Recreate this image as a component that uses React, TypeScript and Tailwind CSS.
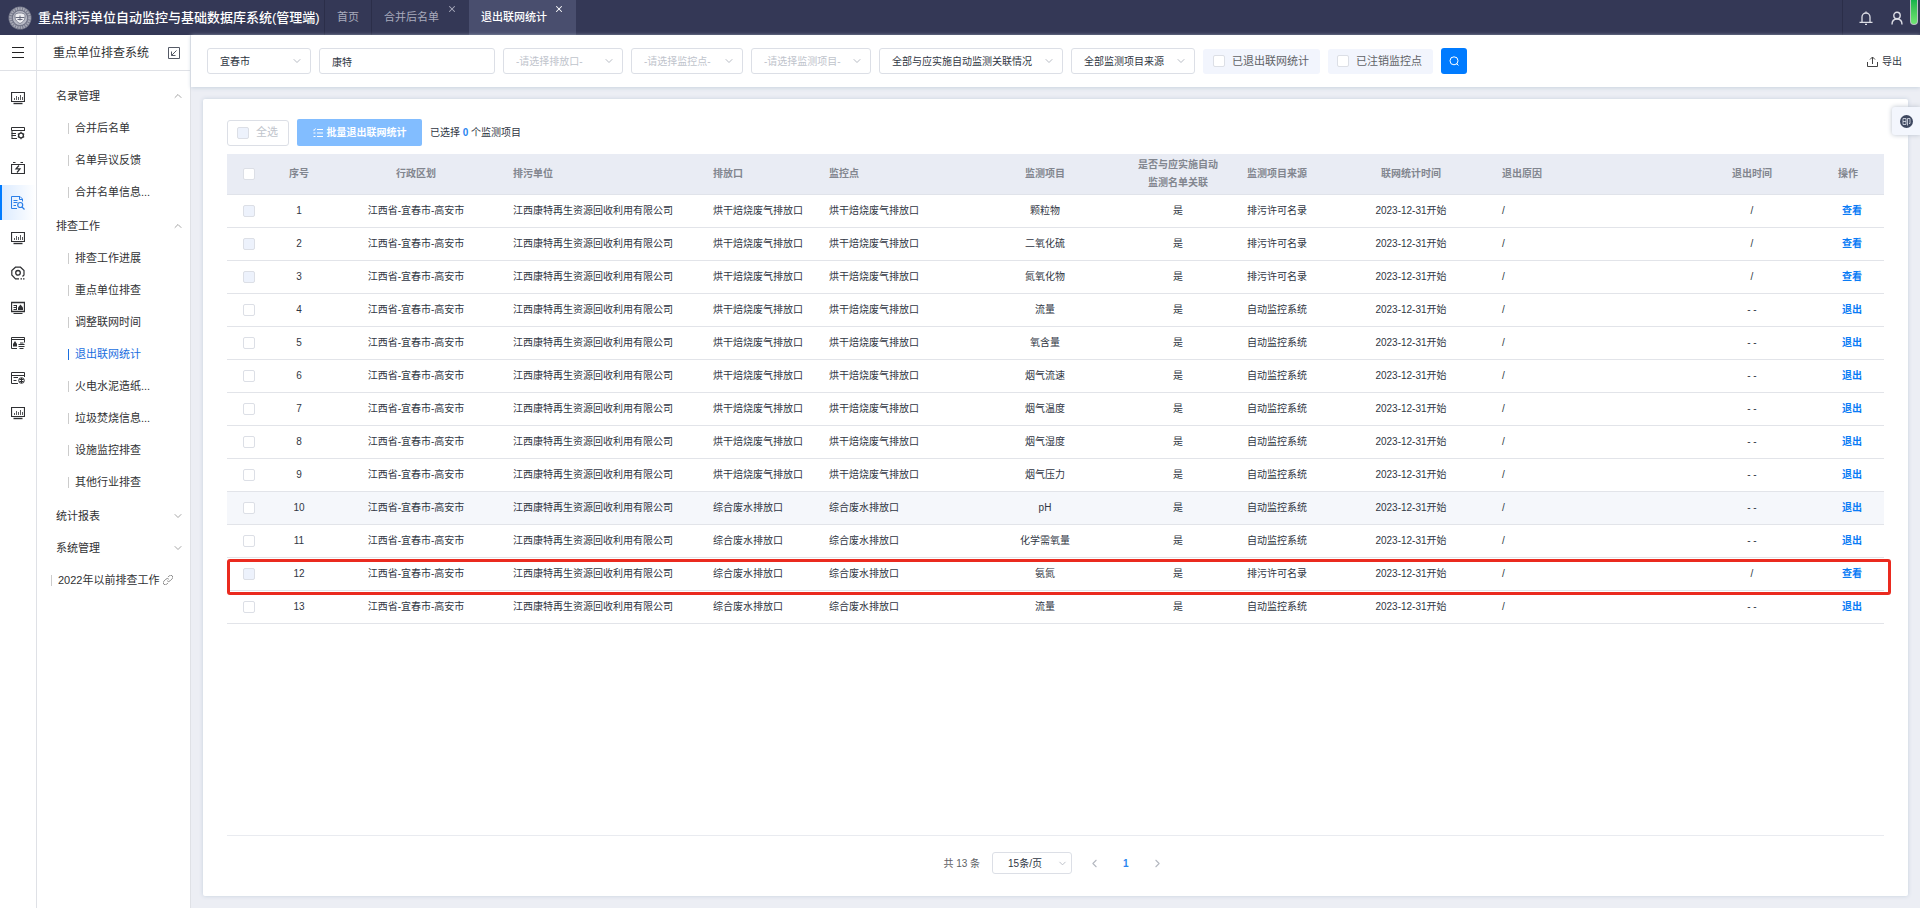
import { useState } from "react"
import type { ReactNode } from "react"
import { ChevronDown, ChevronLeft, ChevronRight, ChevronUp, X } from "lucide-react"

const menuGroups = [
    { title: "名录管理", open: true, items: ["合并后名单", "名单异议反馈", "合并名单信息..."] },
    {
        title: "排查工作",
        open: true,
        items: [
            "排查工作进展",
            "重点单位排查",
            "调整联网时间",
            "退出联网统计",
            "火电水泥造纸...",
            "垃圾焚烧信息...",
            "设施监控排查",
            "其他行业排查",
        ],
    },
    { title: "统计报表", open: false, items: [] },
    { title: "系统管理", open: false, items: [] },
]

const GAS = "烘干焙烧废气排放口"
const WATER = "综合废水排放口"

const rows = [
    { outlet: GAS, item: "颗粒物", licensed: true },
    { outlet: GAS, item: "二氧化硫", licensed: true },
    { outlet: GAS, item: "氮氧化物", licensed: true },
    { outlet: GAS, item: "流量", licensed: false },
    { outlet: GAS, item: "氧含量", licensed: false },
    { outlet: GAS, item: "烟气流速", licensed: false },
    { outlet: GAS, item: "烟气温度", licensed: false },
    { outlet: GAS, item: "烟气湿度", licensed: false },
    { outlet: GAS, item: "烟气压力", licensed: false },
    { outlet: WATER, item: "pH", licensed: false },
    { outlet: WATER, item: "化学需氧量", licensed: false },
    { outlet: WATER, item: "氨氮", licensed: true },
    { outlet: WATER, item: "流量", licensed: false },
]

const ACTIVE_ROW = 9
const MARKED_ROW = 11

function RailSvg({ children }: { children: ReactNode }) {
    return (
        <svg width="14" height="14" viewBox="0 0 14 14" fill="none" stroke="currentColor">
            {children}
        </svg>
    )
}

function ChartIcon() {
    return (
        <RailSvg>
            <path d="M.5 1.500h13v9H.5z" strokeWidth="1.200" />
            <path d="M2.500 12.500h9" strokeWidth="1.400" />
            <path d="M3.500 9V7M5.500 9V5M7.500 9V6M9.500 9V4M11.500 9V6" strokeWidth=".8" />
        </RailSvg>
    )
}

function GearListIcon() {
    return (
        <RailSvg>
            <path d="M13.500 5V1.500H.5M.5 4.500h13M.5 1.500v3M.5 7.500h4.500M.5 9.500h4.500M.5 12.500h5.500M1 4.500v8" />
            <circle cx="10" cy="9.500" r="2.400" strokeWidth="1.300" />
            <path d="M10 5.800v1.300M10 11.900v1.300M6.800 7.700l1.200.7M12 10.600l1.200.7M6.800 11.300l1.200-.7M12 8.400l1.200-.7" strokeWidth="1.200" />
        </RailSvg>
    )
}

function PowerIcon() {
    return (
        <RailSvg>
            <path d="M.5 3.500h13v9H.5z" strokeWidth="1.200" />
            <path d="M2 1.500h2.500M9.500 1.500H12M8 4.500L5 7.800h4L6 11.500" strokeWidth="1.200" />
        </RailSvg>
    )
}

function SearchDocIcon() {
    return (
        <RailSvg>
            <path d="M6 12.500H.5V.5h8.500l2.500 2.500v2.500M8.500.500v3h3M2.500 4.500h4M2.500 6.500h4M2.500 9.500h2.500" />
            <circle cx="9.200" cy="9" r="2.500" strokeWidth="1.200" />
            <path d="M11 11l2.500 2.500" strokeWidth="1.200" />
        </RailSvg>
    )
}

function HexIcon() {
    return (
        <RailSvg>
            <path d="M8 12.800H4.500L.8 9V4.500L4.500 1.200h5L13 4.500V9l-1.500 1.500M9.500 12.800h1.500M12 12.800h1.500" strokeWidth="1.200" />
            <circle cx="7" cy="6.800" r="2.300" strokeWidth="1.300" />
        </RailSvg>
    )
}

function FireScreenIcon() {
    return (
        <RailSvg>
            <path d="M.5 1.500h13v9H.5z" strokeWidth="1.300" />
            <path d="M2.500 12.500h9M2.500 4.500h3M2.500 6.500h3M2.500 8.500h3M5.500 4v5" />
            <path d="M9.500 3.500l2.500 3v2.500H7V6.500z" fill="currentColor" stroke="none" />
        </RailSvg>
    )
}

function FirePanelIcon() {
    return (
        <RailSvg>
            <path d="M13.500 6.500v-5H.5v11H6M.5 3.500h13" />
            <path d="M4 5l2 3v2.500H2V8z" fill="currentColor" stroke="none" />
            <path d="M7.500 8.500h6M7.500 10.500h6M8.500 12.500h4M9 7h3.500" />
        </RailSvg>
    )
}

function ShieldPanelIcon() {
    return (
        <RailSvg>
            <path d="M13.500 6V1.500H.5v11H7M.5 4.500h13M2.500 6.500h4.500M2.500 9.500h3" />
            <circle cx="10.500" cy="9.500" r="2.800" />
            <path d="M8.500 8.500h4M8.500 10.500h4M10.500 7v5" />
        </RailSvg>
    )
}

const railItems = [
    { label: "统计", Icon: ChartIcon },
    { label: "配置", Icon: GearListIcon },
    { label: "电力", Icon: PowerIcon },
    { label: "排查", Icon: SearchDocIcon },
    { label: "监控", Icon: ChartIcon },
    { label: "设备", Icon: HexIcon },
    { label: "焚烧", Icon: FireScreenIcon },
    { label: "排放", Icon: FirePanelIcon },
    { label: "防护", Icon: ShieldPanelIcon },
    { label: "报表", Icon: ChartIcon },
]

function Emblem() {
    return (
        <svg width="24" height="24" viewBox="0 0 24 24" className="shrink-0">
            <circle cx="12" cy="12" r="11.500" fill="#777a8c" />
            <circle cx="12" cy="12" r="9.500" fill="none" stroke="#a9abb8" strokeWidth="2.500" strokeDasharray="1.500 1" />
            <circle cx="12" cy="12" r="7.500" fill="#b9bbc6" stroke="#5c5f75" strokeWidth=".6" />
            <path d="M7 8.500c2-2 8-2 10 0v3c0 2.500-2.500 5-5 6-2.500-1-5-3.500-5-6z" fill="#eeeef2" stroke="#6a6d80" strokeWidth=".8" />
            <path d="M7.500 11.500h9M12 9.500v5M9.500 13.500h5" stroke="#5a5d73" strokeWidth=".9" />
        </svg>
    )
}

function Picker({ label, text, className, muted }: { label: string; text: string; className: string; muted?: boolean }) {
    return (
        <div className={`relative shrink-0 ${className}`}>
            <select
                aria-label={label}
                className={`h-[26px] w-full appearance-none rounded-[3px] border border-[#dcdfe6] bg-white pl-3 text-[10px] outline-none ${muted ? "text-[#c0c4cc]" : "text-[#303643]"}`}
            >
                <option>{text}</option>
            </select>
            <ChevronDown size={12} strokeWidth={2} className="pointer-events-none absolute top-[7px] right-2 text-[#b8bcc4]" />
        </div>
    )
}

function CheckBox({ label, disabled }: { label: string; disabled?: boolean }) {
    return (
        <input
            type="checkbox"
            aria-label={label}
            disabled={disabled}
            className="block size-3 shrink-0 appearance-none rounded-[2px] border border-[#dcdfe6] bg-white checked:bg-[#007bff] disabled:bg-[#edf2fc]"
        />
    )
}

function TopBar() {
    return (
        <header className="flex h-[35px] shrink-0 items-stretch bg-[#343856] text-[11px] text-[#a9abbd]">
            <div className="flex w-[324px] shrink-0 items-center gap-1.5 pl-2">
                <Emblem />
                <h1 className="text-[13px] font-medium whitespace-nowrap text-white">重点排污单位自动监控与基础数据库系统(管理端)</h1>
            </div>
            <nav className="flex">
                <a href="#home" className="flex w-12 items-center justify-center border-x border-[#2b2e49]">首页</a>
                <div className="relative flex w-[97px] items-center pl-3">
                    <a href="#merged">合并后名单</a>
                    <button type="button" aria-label="关闭合并后名单" className="absolute top-1 right-3">
                        <X size={10} strokeWidth={2.5} />
                    </button>
                </div>
                <div className="relative flex w-[107px] items-center bg-[#494e6e] pl-3 font-medium text-white">
                    <a href="#exit">退出联网统计</a>
                    <button type="button" aria-label="关闭退出联网统计" className="absolute top-1 right-3">
                        <X size={10} strokeWidth={2.5} />
                    </button>
                </div>
            </nav>
            <div className="relative ml-auto flex w-[78px] items-center gap-[18px] border-l border-[#2b2e49] pl-4 text-[#dcdde5]">
                <button type="button" aria-label="通知">
                    <svg width="14" height="14" viewBox="0 0 14 14" fill="none" stroke="currentColor" strokeWidth="1.3">
                        <path d="M3 11V6a4 4 0 0 1 8 0v5M.5 11.300h13M6 13.300h2M7 .5V2" />
                    </svg>
                </button>
                <button type="button" aria-label="用户">
                    <svg width="12" height="14" viewBox="0 0 12 14" fill="none" stroke="currentColor" strokeWidth="1.4">
                        <circle cx="6" cy="4.500" r="3.200" />
                        <path d="M1 13.500c0-3.500 2-5.500 5-5.500s5 2 5 5.500" />
                    </svg>
                </button>
                <span className="absolute top-0 right-0.5 h-[25px] w-2 rounded-b-full border border-t-0 border-[#b9c4c4] bg-gradient-to-b from-[#12b34b] to-[#6fe673]" />
            </div>
        </header>
    )
}

function Rail() {
    return (
        <nav className="flex w-[37px] shrink-0 flex-col border-r border-[#dfe1e6] bg-white text-[#2f3033]">
            <button type="button" aria-label="展开菜单" className="flex h-9 shrink-0 items-center justify-center border-b border-[#dfe1e6]">
                <svg width="12" height="11" viewBox="0 0 12 11" stroke="#222" strokeWidth="1.200">
                    <path d="M0 .5h12M0 5.500h12M0 10.500h12" />
                </svg>
            </button>
            <div className="flex flex-col pt-[9px]">
                {railItems.map(({ label, Icon }, i) => (
                    <a
                        key={label}
                        href="#rail"
                        aria-label={label}
                        className={`flex h-[35px] items-center justify-center ${i === 3 ? "border-l-2 border-[#007bff] bg-gradient-to-r from-[#dcebff] to-white pr-0.5 text-[#2b7fe8]" : ""}`}
                    >
                        <Icon />
                    </a>
                ))}
            </div>
        </nav>
    )
}

function SideMenu() {
    return (
        <aside className="flex w-[154px] shrink-0 flex-col border-r border-[#dfe1e6] bg-white text-[11px] text-[#303133]">
            <div className="flex h-9 shrink-0 items-center justify-between border-b border-[#dfe1e6] pr-2.5 pl-4">
                <h2 className="text-xs">重点单位排查系统</h2>
                <button type="button" aria-label="收起">
                    <svg width="12" height="12" viewBox="0 0 12 12" fill="none" stroke="#555a66">
                        <path d="M.5.500h11v11H.5zM8.500 3.500l-5 5M3.500 4.500v4h4" />
                    </svg>
                </button>
            </div>
            <div className="pt-[9px]">
                {menuGroups.map(group => (
                    <div key={group.title}>
                        <button type="button" className="flex h-8 w-full items-center justify-between pr-1.5 pl-[19px]">
                            {group.title}
                            {group.open
                                ? <ChevronUp size={12} strokeWidth={1.5} className="text-[#888]" />
                                : <ChevronDown size={12} strokeWidth={1.5} className="text-[#888]" />}
                        </button>
                        {group.open && (
                            <ul className="pb-0.5">
                                {group.items.map(item => {
                                    const current = item === "退出联网统计"
                                    return (
                                        <li key={item} className="flex h-8 items-center pl-[31px]">
                                            <a
                                                href="#menu"
                                                className={`flex items-center gap-1.5 whitespace-nowrap before:h-[11px] before:w-px ${current ? "text-[#1a6fe0] before:bg-[#1a6fe0]" : "before:bg-[#ccc]"}`}
                                            >
                                                {item}
                                            </a>
                                        </li>
                                    )
                                })}
                            </ul>
                        )}
                    </div>
                ))}
                <a href="#old" className="flex h-8 items-center gap-1.5 pl-3.5 whitespace-nowrap before:h-[11px] before:w-px before:bg-[#ccc]">
                    <span className="flex items-center gap-1">
                        2022年以前排查工作
                        <svg width="10" height="10" viewBox="0 0 24 24" fill="none" stroke="#777" strokeWidth="2">
                            <path d="M10 14a5 5 0 0 0 7 0l5-5a4.500 4.500 0 0 0-7-7l-3 3M14 10a5 5 0 0 0-7 0l-5 5a4.500 4.500 0 0 0 7 7l3-3" />
                        </svg>
                    </span>
                </a>
            </div>
        </aside>
    )
}

function FilterBar() {
    return (
        <form className="flex h-[52px] shrink-0 items-center gap-2 bg-white pr-[18px] pl-4 text-[10px] text-[#303643] shadow-[0_1px_4px_#c9d3de]">
            <Picker label="城市" text="宜春市" className="w-[104px]" />
            <input
                aria-label="单位名称"
                defaultValue="康特"
                className="h-[26px] w-44 shrink-0 rounded-[3px] border border-[#dcdfe6] px-3 outline-none"
            />
            <Picker label="排放口" text="-请选择排放口-" className="w-[120px]" muted />
            <Picker label="监控点" text="-请选择监控点-" className="w-28" muted />
            <Picker label="监测项目" text="-请选择监测项目-" className="w-[120px]" muted />
            <Picker label="关联情况" text="全部与应实施自动监测关联情况" className="w-[184px]" />
            <Picker label="项目来源" text="全部监测项目来源" className="w-[124px]" />
            <label className="flex h-[25px] w-[117px] shrink-0 items-center gap-[7px] rounded-[3px] bg-[#f2f5fd] pl-2.5 text-[11px] whitespace-nowrap text-[#606266]">
                <CheckBox label="已退出联网统计" />
                已退出联网统计
            </label>
            <label className="flex h-[25px] w-[105px] shrink-0 items-center gap-[7px] rounded-[3px] bg-[#f2f5fd] pl-[9px] text-[11px] whitespace-nowrap text-[#606266]">
                <CheckBox label="已注销监控点" />
                已注销监控点
            </label>
            <button type="button" aria-label="查询" className="flex h-[26px] w-[26px] shrink-0 items-center justify-center rounded-[3px] bg-[#007bff] text-white">
                <svg width="10" height="10" viewBox="0 0 10 10" fill="none" stroke="currentColor">
                    <circle cx="5" cy="4.800" r="4" />
                    <path d="M7.500 7.500L9.500 9.500" />
                </svg>
            </button>
            <button type="button" className="ml-auto flex shrink-0 items-center gap-1">
                <svg width="11" height="11" viewBox="0 0 11 11" fill="none" stroke="#444">
                    <path d="M.5 6v4.500h10V6M5.500 8V1M3 3.500L5.500 1 8 3.500" />
                </svg>
                导出
            </button>
        </form>
    )
}

function DataTable() {
    return (
        <table className="w-full table-fixed border-collapse text-[10px] text-[#303643]">
            <colgroup>
                <col className="w-11" />
                <col className="w-14" />
                <col className="w-[178px]" />
                <col className="w-[200px]" />
                <col className="w-[116px]" />
                <col className="w-[152px]" />
                <col className="w-36" />
                <col className="w-[122px]" />
                <col className="w-[89px]" />
                <col className="w-[166px]" />
                <col />
                <col className="w-[124px]" />
                <col className="w-[70px]" />
            </colgroup>
            <thead>
                <tr className="h-10 border-b border-[#e0e3ea] bg-[#e9ecf4] text-[#82868f] [&>th]:font-bold">
                    <th className="pl-4"><CheckBox label="选择全部" /></th>
                    <th>序号</th>
                    <th>行政区划</th>
                    <th className="pl-2 text-left">排污单位</th>
                    <th className="pl-2 text-left">排放口</th>
                    <th className="pl-2 text-left">监控点</th>
                    <th>监测项目</th>
                    <th className="leading-[18px]">是否与应实施自动<br />监测名单关联</th>
                    <th className="pl-2 text-left">监测项目来源</th>
                    <th>联网统计时间</th>
                    <th className="pl-2 text-left">退出原因</th>
                    <th>退出时间</th>
                    <th className="pr-0.5">操作</th>
                </tr>
            </thead>
            <tbody>
                {rows.map((row, i) => (
                    <tr key={i} className={`relative h-[33px] border-b border-[#e2e4e9] text-center ${i === ACTIVE_ROW ? "bg-[#f5f7fb]" : ""}`}>
                        <td className="pl-4">
                            <CheckBox label={`选择第${i + 1}行`} disabled={row.licensed} />
                            {i === MARKED_ROW && (
                                <span className="pointer-events-none absolute top-0.5 -right-[7px] left-0 z-10 h-9 rounded-[3px] border-[3px] border-[#ea2a1f]" />
                            )}
                        </td>
                        <td>{i + 1}</td>
                        <td>江西省-宜春市-高安市</td>
                        <td className="pl-2 text-left">江西康特再生资源回收利用有限公司</td>
                        <td className="pl-2 text-left">{row.outlet}</td>
                        <td className="pl-2 text-left">{row.outlet}</td>
                        <td>{row.item}</td>
                        <td>是</td>
                        <td className="pl-2 text-left">{row.licensed ? "排污许可名录" : "自动监控系统"}</td>
                        <td>2023-12-31开始</td>
                        <td className="pl-2 text-left">/</td>
                        <td>{row.licensed ? "/" : "- -"}</td>
                        <td className="pl-1.5">
                            <button type="button" className="font-bold text-[#0a7cf5]">{row.licensed ? "查看" : "退出"}</button>
                        </td>
                    </tr>
                ))}
            </tbody>
        </table>
    )
}

function Pagination() {
    const [page] = useState(1)

    return (
        <div className="flex h-[61px] shrink-0 items-center justify-center border-t border-[#e9ebf0] pr-1 pb-1.5 text-[10px] text-[#606266]">
            <span>共 13 条</span>
            <div className="relative ml-3 w-20">
                <select aria-label="每页条数" className="h-[22px] w-full appearance-none rounded-[3px] border border-[#dcdfe6] bg-white pl-[15px] text-[#303643] outline-none">
                    <option>15条/页</option>
                </select>
                <ChevronDown size={11} strokeWidth={2} className="pointer-events-none absolute top-1.5 right-1 text-[#b8bcc4]" />
            </div>
            <button type="button" aria-label="上一页" className="ml-4 text-[#b4b8c0]"><ChevronLeft size={13} /></button>
            <button type="button" className="mx-[22px] font-bold text-[#2a86f0]">{page}</button>
            <button type="button" aria-label="下一页" className="text-[#b4b8c0]"><ChevronRight size={13} /></button>
        </div>
    )
}

export default function App() {
    return (
        <div className="flex h-screen flex-col overflow-hidden bg-[#eceef4] font-['Liberation_Sans','Noto_Sans_CJK_SC',sans-serif]">
            <TopBar />
            <div className="flex min-h-0 flex-1">
                <Rail />
                <SideMenu />
                <div className="relative flex min-w-0 flex-1 flex-col">
                    <FilterBar />
                    <main className="m-3 flex min-h-0 flex-1 flex-col rounded-[2px] bg-white px-6 shadow-[0_0_4px_#c5d0de]">
                        <div className="mt-5 mb-2 flex h-[27px] shrink-0 items-center gap-2 text-[10px]">
                            <label className="flex h-[26px] w-[62px] items-center gap-[7px] rounded-[3px] border border-[#dcdfe6] pl-[9px] text-[11px] text-[#c0c4cc]">
                                <CheckBox label="全选" disabled />
                                全选
                            </label>
                            <button type="button" disabled className="flex h-[27px] w-[125px] items-center justify-center gap-1 rounded-[2px] bg-[#82bdff] font-bold text-white">
                                <svg width="10" height="10" viewBox="0 0 10 10" stroke="currentColor" fill="none">
                                    <path d="M4 1.500h6M4 5h6M4 8.500h6M0 1.500l1 1L2.500.5M.5 5h2M.5 8.500h2" />
                                </svg>
                                批量退出联网统计
                            </button>
                            <p className="text-[#303643]">已选择 <b className="text-[#2a86f0]">0</b> 个监测项目</p>
                        </div>
                        <div className="flex-1">
                            <DataTable />
                        </div>
                        <Pagination />
                    </main>
                    <button
                        type="button"
                        aria-label="翻译"
                        className="absolute top-[72px] right-0 flex h-7 w-7 items-center justify-center rounded-l-[3px] bg-[#f3f6fd] shadow-[0_0_5px_#b9c0cc]"
                    >
                        <svg width="13" height="13" viewBox="0 0 13 13" fill="none" stroke="#dfe3ee" strokeWidth=".8">
                            <circle cx="6.500" cy="6.500" r="6.500" fill="#3e4860" stroke="none" />
                            <path d="M3 3.500h3v6H3zM3 6.500h3M7.500 3.500h2.500v5H9M7.500 3.500v7" />
                        </svg>
                    </button>
                </div>
            </div>
        </div>
    )
}
